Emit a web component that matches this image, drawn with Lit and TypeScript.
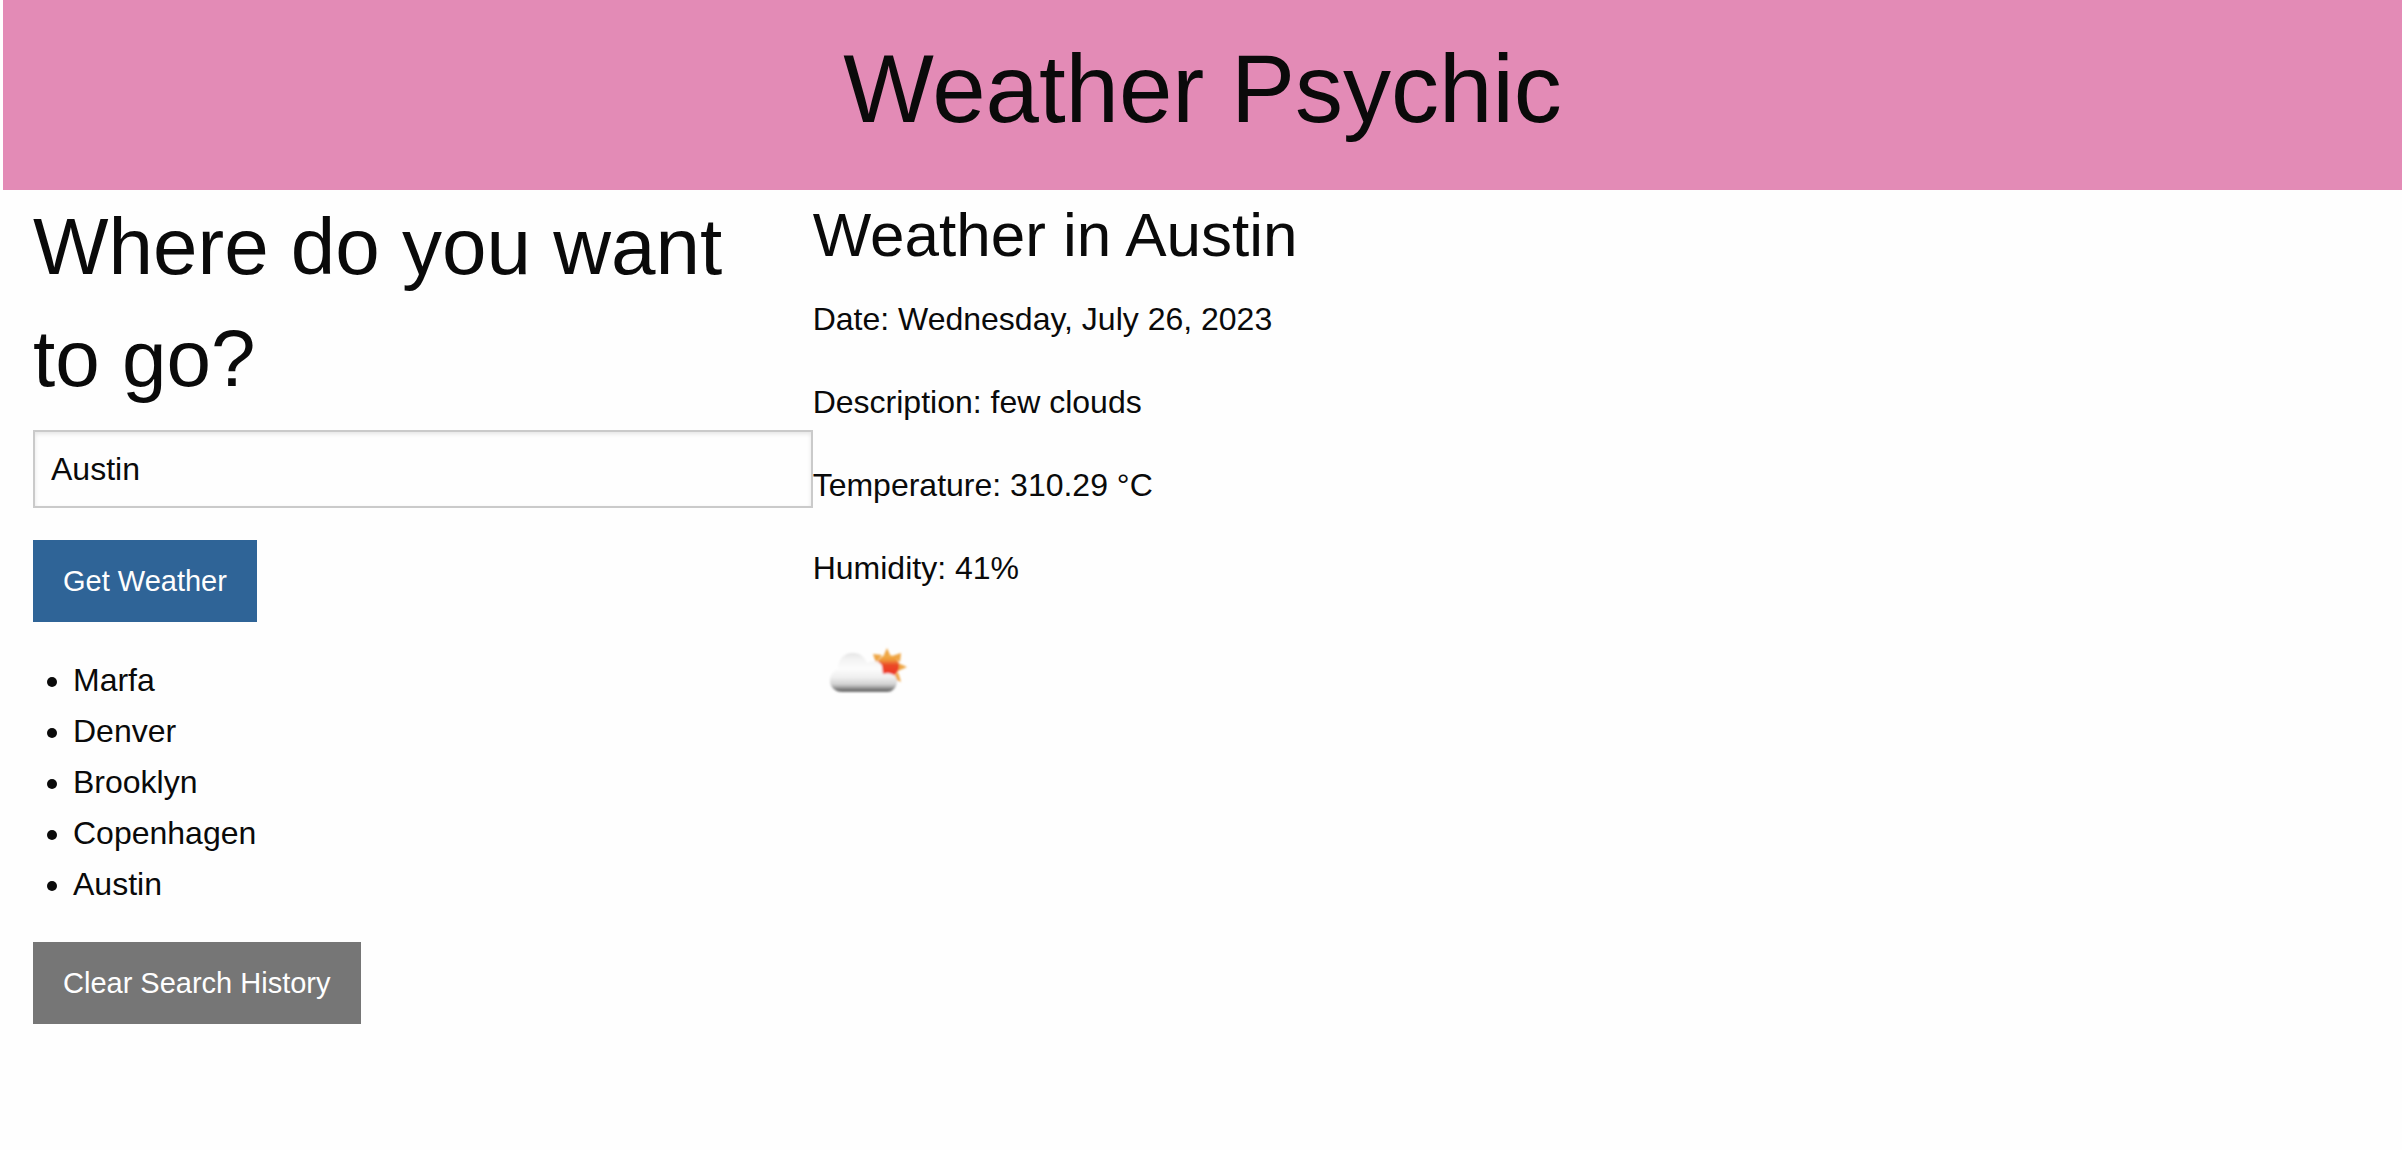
import { LitElement, html, css, svg } from "lit";
import { customElement, state } from "lit/decorators.js";

const RAYS = [
  "74,22 78,31 70,31",
  "60,28 69,29 63,37",
  "88,27 87,36 79,30",
  "94,41 85,45 85,37",
  "88,56 79,52 85,46",
];

@customElement("weather-icon")
export class WeatherIcon extends LitElement {
  static styles = css`
    :host {
      display: block;
    }
    .icon {
      display: block;
      width: 100px;
      height: 100px;
    }
  `;

  render() {
    return html`
      <svg class="icon" viewBox="0 0 100 100" role="img" aria-label="few clouds">
        <defs>
          <filter id="soft" x="-10%" y="-10%" width="120%" height="120%">
            <feGaussianBlur stdDeviation="0.8" />
          </filter>
          <linearGradient id="sun" x1="0" y1="0" x2="0" y2="1">
            <stop offset="0" stop-color="#f2ae4a" />
            <stop offset="0.22" stop-color="#ef9a3a" />
            <stop offset="0.45" stop-color="#ea4a28" />
            <stop offset="1" stop-color="#ef3024" />
          </linearGradient>
          <linearGradient id="cloud" gradientUnits="userSpaceOnUse" x1="0" y1="27" x2="0" y2="66">
            <stop offset="0" stop-color="#e2e2e2" />
            <stop offset="0.12" stop-color="#f1f1f1" />
            <stop offset="0.4" stop-color="#fcfcfc" />
            <stop offset="0.62" stop-color="#f0f0f0" />
            <stop offset="0.8" stop-color="#d2d2d2" />
            <stop offset="0.88" stop-color="#a4a4a4" />
            <stop offset="0.94" stop-color="#747474" />
            <stop offset="1" stop-color="#6c6c6c" />
          </linearGradient>
        </defs>
        <g filter="url(#soft)">
          ${RAYS.map((points) => svg`<polygon points=${points} fill="#eea544" />`)}
          <circle cx="75" cy="40" r="11" fill="url(#sun)" />
          <path
            d="M29 66 C22 66 17 61 17 55 C17 49 20 45 25 43 C25 33 31 27 40 27 C47 27 52 31 54 37 C59 34 67 35 69 40 L70 48 C75 46 84 48 84 55 C84 61 80 66 74 66 Z"
            fill="url(#cloud)"
          />
        </g>
      </svg>
    `;
  }
}

@customElement("app-root")
export class AppRoot extends LitElement {
  static styles = css`
    :host {
      display: block;
      box-sizing: border-box;
      min-height: 100vh;
      padding-left: 3px;
      background: #fefefe;
      color: #0a0a0a;
      font-family: "Helvetica Neue", Helvetica, "Liberation Sans", Arial, sans-serif;
      font-size: 32px;
      line-height: 51px;
    }
    *,
    *::before,
    *::after {
      box-sizing: border-box;
    }
    h1,
    h2,
    h3,
    p,
    ul {
      margin: 0;
      font-weight: 400;
    }
    .banner {
      padding: 22px 30px 34px;
      background: #e38bb6;
      text-align: center;
    }
    .title {
      font-size: 96px;
      line-height: 134px;
    }
    .content {
      display: grid;
      grid-template-columns: minmax(0, 1fr) minmax(0, 2fr);
      align-items: start;
      padding: 1px 30px 0;
    }
    .search {
      display: flex;
      flex-direction: column;
      align-items: flex-start;
      gap: 32px;
    }
    .form {
      display: flex;
      flex-direction: column;
      align-items: flex-start;
      width: 100%;
    }
    .question {
      margin-bottom: 15px;
      padding-right: 16px;
      font-size: 80px;
      line-height: 112px;
    }
    .city {
      width: 100%;
      height: 78px;
      margin-bottom: 32px;
      padding: 16px;
      border: 2px solid #cacaca;
      border-radius: 0;
      background: #fefefe;
      box-shadow: inset 0 2px 4px rgba(10, 10, 10, 0.1);
      color: inherit;
      font-family: inherit;
      font-size: 32px;
    }
    .button {
      height: 82px;
      padding: 0 30px;
      border: 0;
      border-radius: 0;
      background: #2f6497;
      color: #fefefe;
      font-family: inherit;
      font-size: 29px;
      line-height: 32px;
    }
    .button.secondary {
      background: #767676;
    }
    .history {
      padding: 1px 0 0 40px;
    }
    .place {
      margin-bottom: 16px;
      font-size: 62px;
      line-height: 87px;
    }
    .fact {
      margin-bottom: 32px;
    }
  `;

  @state() private city = "Austin";
  @state() private history = ["Marfa", "Denver", "Brooklyn", "Copenhagen", "Austin"];

  private facts = [
    "Date: Wednesday, July 26, 2023",
    "Description: few clouds",
    "Temperature: 310.29 °C",
    "Humidity: 41%",
  ];

  private onInput(event: Event) {
    this.city = (event.target as HTMLInputElement).value;
  }

  private onSubmit(event: Event) {
    event.preventDefault();
    const name = this.city.trim();
    if (name) this.history = [...this.history, name];
  }

  private clearHistory() {
    this.history = [];
  }

  render() {
    return html`
      <header class="banner"><h1 class="title">Weather Psychic</h1></header>
      <main class="content">
        <section class="search">
          <form class="form" @submit=${this.onSubmit}>
            <h2 class="question"><label for="city">Where do you want to go?</label></h2>
            <input class="city" id="city" type="text" .value=${this.city} @input=${this.onInput} />
            <button class="button" type="submit">Get Weather</button>
          </form>
          <ul class="history">
            ${this.history.map((name) => html`<li>${name}</li>`)}
          </ul>
          <button class="button secondary" type="button" @click=${this.clearHistory}>
            Clear Search History
          </button>
        </section>
        <section>
          <h3 class="place">Weather in Austin</h3>
          ${this.facts.map((fact) => html`<p class="fact">${fact}</p>`)}
          <weather-icon></weather-icon>
        </section>
      </main>
    `;
  }
}
